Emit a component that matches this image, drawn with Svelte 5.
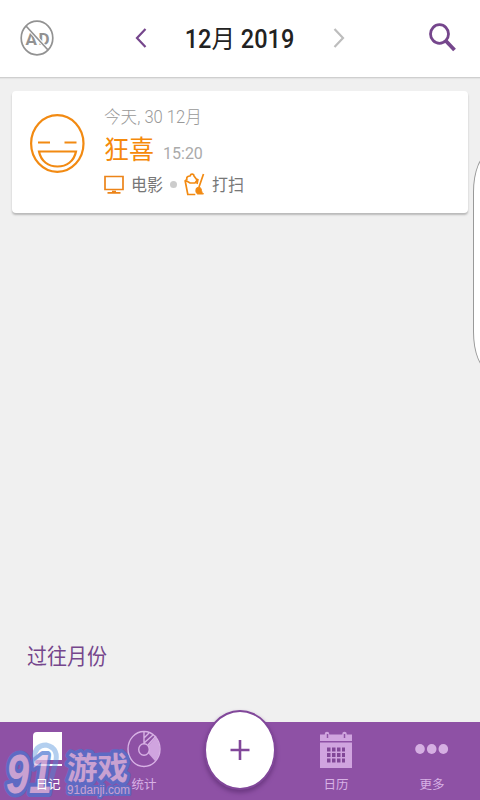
<style>
    :global(body) {
        background-color: #f0f0f0;
        overflow: hidden;
    }

    .app {
        position: relative;
        width: 480px;
        height: 800px;
        overflow: hidden;

        display: flex;
        flex-direction: column;

        background-color: #f0f0f0;
        font-family: Roboto, "Noto Sans CJK SC", sans-serif;
        white-space: nowrap;
    }

    svg {
        display: block;
        flex: none;
    }

    button {
        padding: 0;
        border: none;
        background: none;
        font: inherit;
        color: inherit;
    }

    .header {
        box-sizing: border-box;
        height: 78px;
        padding: 0 23px 2px 20px;
        border-bottom: 1px solid #cfcfcf;
        background-color: #fff;
        box-shadow: 0 1px 1px #e4e4e4;

        display: flex;
        align-items: center;
        justify-content: space-between;
    }

    .month {
        display: flex;
        align-items: center;
        width: 210px;
        justify-content: space-between;
        margin-right: 4px;
    }

    .month h1 {
        margin: 4px 0 0;
        font-size: 23.5px;
        font-weight: 500;
        line-height: 30px;
        color: #222;
        transform: scaleY(1.06);
    }

    .month h1 span {
        font-weight: 400;
    }

    .entry {
        box-sizing: border-box;
        height: 122px;
        margin: 13px 12px 0;
        padding: 14px 18px 0;
        border-radius: 4px;
        background-color: #fff;
        box-shadow: 0 2px 2px #b9b9b9;

        display: flex;
        gap: 19px;
    }

    .face {
        margin-top: 9px;
    }

    .date {
        height: 26px;
        font-size: 16.6px;
        font-weight: 300;
        line-height: 26px;
        color: #999;
        transform: scaleY(1.06);
    }

    .mood {
        display: flex;
        align-items: baseline;
        gap: 9px;
        height: 36px;
        line-height: 38px;
        font-size: 16px;
        color: #aaa;
        transform: scaleY(1.06);
    }

    .mood strong {
        font-size: 25px;
        font-weight: 400;
        color: #f58a0b;
    }

    .activities {
        display: flex;
        align-items: center;
        height: 34px;
        font-size: 16px;
        color: #777;
    }

    .activities span {
        margin-left: 7px;
        transform: scaleY(1.06);
    }

    .activities i {
        width: 7px;
        height: 7px;
        margin: 0 7px;
        border-radius: 50%;
        background-color: #ccc;
    }

    .past {
        margin: auto 0 49px 27px;
        align-self: flex-start;
        font-size: 20px;
        line-height: 32px;
        color: #75468c;
        transform: scaleY(1.06);
    }

    .tabs {
        height: 78px;
        background-color: #8e51a5;
        color: #d8b2e5;
        display: grid;
        grid-template-columns: repeat(5, 96px);
    }

    .tab {
        display: flex;
        flex-direction: column;
        align-items: center;
        padding-top: 8px;
        font-size: 12.5px;
        line-height: 20px;
    }

    .tab svg {
        margin-bottom: 5px;
    }

    .tab.active {
        color: #fff;
    }

    .tab.active span {
        position: relative;
        z-index: 1;
    }

    .add {
        box-sizing: border-box;
        width: 72px;
        height: 80px;
        margin: -12px auto 0;
        border: 2.5px solid #81479a;
        border-radius: 50%;
        background-color: #fff;
        box-shadow: 0 3px 4px #6d3983;

        display: flex;
        align-items: center;
        justify-content: center;
    }

    /* handle of the side panel, peeking over the right edge */
    .handle {
        position: absolute;
        top: 154px;
        left: 473px;
        box-sizing: border-box;
        width: 40px;
        height: 216px;
        border: 1px solid #999;
        border-radius: 16px / 38px;
        background-color: #fff;
    }

    .watermark {
        position: absolute;
        left: 0;
        top: 738px;
        opacity: 0.7;
        font-family: "Liberation Sans", "Noto Sans CJK SC", sans-serif;
    }

    .watermark text {
        paint-order: stroke;
        stroke: #4b75d1;
        stroke-linejoin: round;
        fill: #e3c3e4;
    }
</style>

<script>
    const tabs = [
        { id: 'diary', label: '日记' },
        { id: 'stats', label: '统计' },
        { id: 'add', label: '' },
        { id: 'calendar', label: '日历' },
        { id: 'more', label: '更多' },
    ];

    let active = $state('diary');
</script>

<div class="app">
    <header class="header">
        <svg width="34" height="36" viewBox="0 0 34 36" fill="none" stroke="#929292" stroke-width="1.7">
            <text x="5.500" y="25" font-size="17" font-weight="700" textLength="24" fill="#929292" stroke="none">AD</text>
            <path d="M7 7L27 29" stroke="#fff" stroke-width="3.500" />
            <path d="M6 6L28 30" />
            <ellipse cx="17" cy="18" rx="15.800" ry="16.800" />
        </svg>
        <div class="month">
            <svg width="12" height="20" viewBox="0 0 12 20" fill="none" stroke="#75468c" stroke-width="2.2">
                <path d="M10.500 1L2 10l8.500 9" />
            </svg>
            <h1>12<span>月</span> 2019</h1>
            <svg width="12" height="20" viewBox="0 0 12 20" fill="none" stroke="#bdbdbd" stroke-width="2.2">
                <path d="M1.500 1L10 10l-8.500 9" />
            </svg>
        </div>
        <svg width="28" height="29" viewBox="0 0 28 29" fill="none" stroke="#75468c">
            <ellipse cx="10.500" cy="11" rx="9" ry="9.300" stroke-width="2.800" />
            <path d="M17 18L25.500 27" stroke-width="3.800" />
        </svg>
    </header>

    <article class="entry">
        <svg class="face" width="55" height="59" viewBox="0 0 55 59" fill="none" stroke="#f28a12" stroke-width="2.200">
            <ellipse cx="27.300" cy="29.500" rx="26.200" ry="28.300" />
            <path d="M8 28.500h12M34.500 28.500h12M9 37.500h37c-2 10-9.500 15-18.500 15S11 47.500 9 37.500z" />
        </svg>
        <div>
            <div class="date">今天, 30 12月</div>
            <div class="mood"><strong>狂喜</strong>15:20</div>
            <div class="activities">
                <svg width="20" height="19" viewBox="0 0 20 19" fill="none" stroke="#ec8419" stroke-width="1.700">
                    <path d="M1 1.500h18v13H1zM8 16.500h4M3.500 17.800h13" />
                </svg>
                <span>电影</span>
                <i></i>
                <svg width="21" height="23" viewBox="0 0 21 23" fill="none" stroke="#f28a12" stroke-width="1.700">
                    <path d="M1 7l2.800 14.500h7.500M1 7l5 3h5l3-4-1 5M3 7C2 4 4 3 6 3c1-3 4-2 4 0l3 4M19.500 1l-4.500 13" />
                    <path d="M12.500 15l3-1c3 2 1 5 4 7h-6c-2-1-2-4-1-6z" fill="#f28a12" stroke-width="1" />
                </svg>
                <span>打扫</span>
            </div>
        </div>
    </article>

    <button class="past">过往月份</button>

    <nav class="tabs">
        {#each tabs as tab}
            {#if tab.id === 'add'}
                <button class="add" aria-label="+">
                    <svg width="20" height="22" viewBox="0 0 20 22" stroke="#81479a" stroke-width="2.600">
                        <path d="M10 1v20M.500 11h19" />
                    </svg>
                </button>
            {:else}
                <button class="tab" class:active={active === tab.id} onclick={() => (active = tab.id)}>
                    {#if tab.id === 'diary'}
                        <svg width="30" height="40" viewBox="0 0 30 40">
                            <path d="M4 2h25v28H4q-2 0-2 2t2 2h25v2H5q-5 0-5-5V6q0-4 4-4z" fill="#fff" />
                        </svg>
                    {:else if tab.id === 'stats'}
                        <svg width="34" height="40" viewBox="0 0 34 40" fill="none" stroke="#d8b2e5" stroke-width="1.400">
                            <path d="M21 16l8-9q8 14-1 24l-7-8q3-4 0-7z" fill="#d0a4df" stroke="none" />
                            <ellipse cx="17" cy="19" rx="16" ry="17.500" />
                            <ellipse cx="17" cy="19.500" rx="5.300" ry="5.800" />
                            <path d="M17 2v12M17 8l5-5M17 13l9-8M21 15l8-9" />
                        </svg>
                    {:else if tab.id === 'calendar'}
                        <svg width="32" height="40" viewBox="0 0 32 40">
                            <path d="M0 4.500h32v6.500H0zM0 12.500h32V38H0z" fill="#d0a4df" />
                            <path d="M7 7V4M24.500 7V4" stroke="#d0a4df" stroke-width="4.500" stroke-linecap="round" />
                            <path d="M7.500 8V4M24.500 8V4" stroke="#8e51a5" stroke-width="1.500" />
                            <path d="M7 19.500h18M7 25h18M7 30.500h18" stroke="#814797" stroke-width="4" stroke-dasharray="3.500 1.500" />
                        </svg>
                    {:else}
                        <svg width="34" height="40" viewBox="0 0 34 40" fill="#d5afe2">
                            <ellipse cx="5" cy="19" rx="4.800" ry="5" />
                            <ellipse cx="16.700" cy="19" rx="4.800" ry="5" />
                            <ellipse cx="28.300" cy="19" rx="4.800" ry="5" />
                        </svg>
                    {/if}
                    <span>{tab.label}</span>
                </button>
            {/if}
        {/each}
    </nav>

    <div class="handle"></div>

    <svg class="watermark" width="140" height="62" viewBox="0 0 140 62" fill="none">
        <path d="M34 20q1-13 12-13 14 3 9 20l-7 26" stroke="#4b8ddb" stroke-width="5" opacity=".6" />
        <text x="6" y="55" font-size="55" font-weight="700" font-style="italic" textLength="46" lengthAdjust="spacingAndGlyphs" stroke-width="8">91</text>
        <text x="67" y="41" font-size="31" font-weight="700" textLength="61" lengthAdjust="spacingAndGlyphs" stroke-width="7">游戏</text>
        <text x="67" y="56" font-size="12.500" textLength="63" lengthAdjust="spacingAndGlyphs" stroke-width="4">91danji.com</text>
    </svg>
</div>
